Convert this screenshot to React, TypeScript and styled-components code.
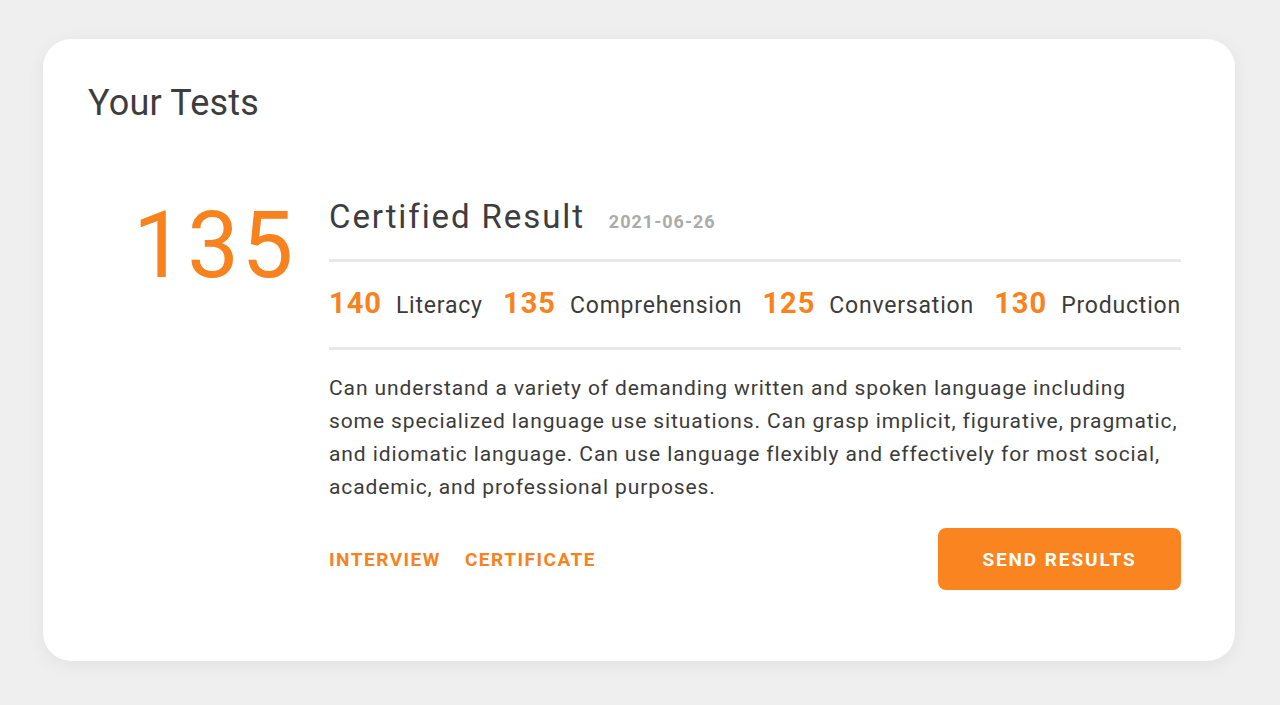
import React from "react";
import styled, { createGlobalStyle } from "styled-components";

const Global = createGlobalStyle`
  html, body { margin: 0; padding: 0; background: #efefef; }
  body { font-family: Roboto, "Noto Sans", sans-serif; color: #3b3b3b; }
  * { box-sizing: border-box; }
`;

const ORANGE = "#f7821e";

const Page = styled.div`
  width: 1280px;
  height: 705px;
  padding: 39px 45px 44px 43px;
  background: #efefef;
`;

const Card = styled.section`
  width: 1192px;
  height: 622px;
  background: #fff;
  border-radius: 28px;
  box-shadow: 0 4px 18px rgba(0, 0, 0, 0.06);
  padding: 41px 54px 0 45px;
`;

const Title = styled.h1`
  margin: 0;
  font-size: 36px;
  font-weight: 400;
  line-height: 46px;
  color: #3d3d3d;
  letter-spacing: 0.2px;
`;

const Body = styled.div`
  display: flex;
  margin-top: 71px;
`;

const BigScore = styled.div`
  width: 241px;
  padding-left: 45px;
  font-size: 92px;
  font-weight: 400;
  line-height: 96px;
  color: ${ORANGE};
  letter-spacing: 2.5px;
  margin-top: 1px;
`;

const Content = styled.div`
  flex: 1;
  display: flex;
  flex-direction: column;
`;

const Header = styled.div`
  display: flex;
  align-items: baseline;
  gap: 24px;
  padding-bottom: 22px;
  border-bottom: 3px solid #e8e8e8;
`;

const HeaderTitle = styled.h2`
  margin: 0;
  font-size: 33px;
  font-weight: 400;
  line-height: 40px;
  color: #3d3d3d;
  letter-spacing: 1.9px;
`;

const DateText = styled.span`
  font-size: 18px;
  font-weight: 700;
  color: #ababab;
  letter-spacing: 1px;
`;

const Scores = styled.div`
  display: flex;
  justify-content: space-between;
  align-items: baseline;
  height: 88px;
  padding-top: 24px;
  border-bottom: 3px solid #e8e8e8;
`;

const ScoreItem = styled.div`
  display: flex;
  align-items: baseline;
  gap: 14px;
`;

const ScoreValue = styled.span`
  font-size: 29px;
  font-weight: 700;
  color: ${ORANGE};
  letter-spacing: 1px;
`;

const ScoreLabel = styled.span`
  font-size: 23px;
  font-weight: 400;
  color: #3b3b3b;
  letter-spacing: 0.8px;
`;

const Description = styled.p`
  margin: 22px 0 0;
  font-size: 21px;
  line-height: 33px;
  color: #3b3b3b;
  letter-spacing: 0.9px;
`;

const Actions = styled.div`
  display: flex;
  align-items: center;
  justify-content: space-between;
  margin-top: 24px;
`;

const Links = styled.div`
  display: flex;
  gap: 24px;
`;

const LinkButton = styled.a`
  font-size: 19px;
  font-weight: 700;
  letter-spacing: 1.5px;
  color: ${ORANGE};
  text-transform: uppercase;
  text-decoration: none;
  cursor: pointer;
`;

const PrimaryButton = styled.button`
  width: 243px;
  height: 62px;
  border: none;
  border-radius: 8px;
  background: #fa841f;
  color: #fff;
  font-family: inherit;
  font-size: 19px;
  font-weight: 700;
  letter-spacing: 1.9px;
  text-transform: uppercase;
  cursor: pointer;
`;

const scores = [
  { value: 140, label: "Literacy" },
  { value: 135, label: "Comprehension" },
  { value: 125, label: "Conversation" },
  { value: 130, label: "Production" },
];

export default function App() {
  return (
    <>
      <Global />
      <Page>
        <Card>
          <Title>Your Tests</Title>
          <Body>
            <BigScore>135</BigScore>
            <Content>
              <Header>
                <HeaderTitle>Certified Result</HeaderTitle>
                <DateText>2021-06-26</DateText>
              </Header>
              <Scores>
                {scores.map((s) => (
                  <ScoreItem key={s.label}>
                    <ScoreValue>{s.value}</ScoreValue>
                    <ScoreLabel>{s.label}</ScoreLabel>
                  </ScoreItem>
                ))}
              </Scores>
              <Description>
                Can understand a variety of demanding written and spoken language including
                <br />
                some specialized language use situations. Can grasp implicit, figurative, pragmatic,
                <br />
                and idiomatic language. Can use language flexibly and effectively for most social,
                <br />
                academic, and professional purposes.
              </Description>
              <Actions>
                <Links>
                  <LinkButton>Interview</LinkButton>
                  <LinkButton>Certificate</LinkButton>
                </Links>
                <PrimaryButton>Send Results</PrimaryButton>
              </Actions>
            </Content>
          </Body>
        </Card>
      </Page>
    </>
  );
}
